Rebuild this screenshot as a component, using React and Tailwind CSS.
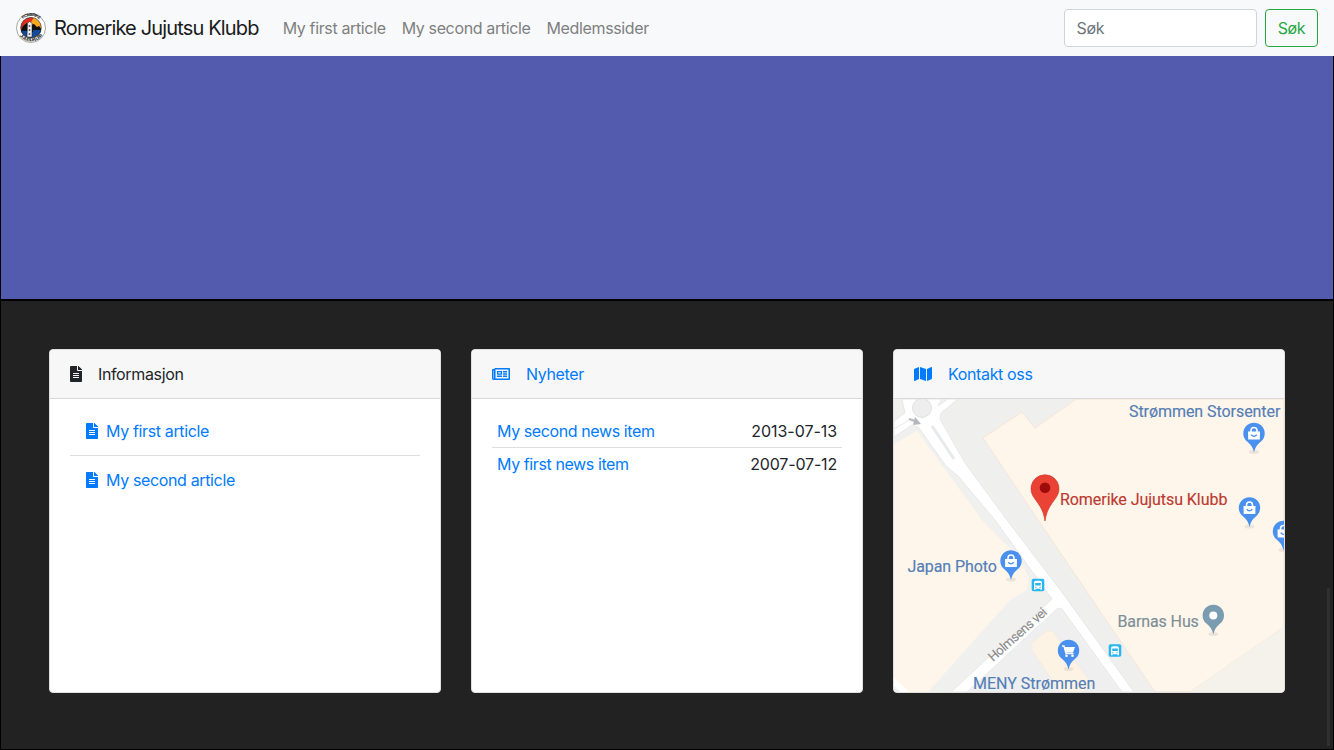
import { FaFileAlt, FaRegNewspaper, FaMap } from "react-icons/fa";

function Logo() {
  return (
    <svg viewBox="0 0 30 30" className="size-[30px]">
      <defs>
        <clipPath id="disc"><circle cx="15" cy="14.7" r="10.3" /></clipPath>
        <path id="top" d="M4.500 9.500A11.700 11.700 0 0 1 25.500 9.500" />
        <path id="bottom" d="M1.600 17.500A13.700 13.700 0 0 0 28.400 17.500" />
      </defs>
      <circle cx="15" cy="15" r="14.500" fill="#fff" stroke="#a5a5a5" strokeWidth="1" />
      <g clipPath="url(#disc)">
        <rect width="30" height="30" fill="#f7a823" />
        <path d="M3 3H19L15 9L10 10L5 16H3Z" fill="#e02b20" />
        <path d="M4 18L7 13L11 9.500L14 12L18 11L21 14L23 13L27 18V20H4Z" fill="#111" />
        <path d="M3 18H12V22H3ZM17 17H27V21H17Z" fill="#12499b" />
        <rect y="19" width="30" height="11" fill="#12499b" />
      </g>
      <circle cx="15" cy="14.700" r="10.300" fill="none" stroke="#222" strokeWidth=".6" />
      <path d="M11.500 10.500L13.500 8.500L16 10V24H11Z" fill="#eee" stroke="#222" strokeWidth=".5" />
      <path d="M13.500 12V14M13.500 16V18M13.500 20V22" stroke="#666" strokeWidth="1.500" />
      <g fontFamily="Liberation Sans, sans-serif" fontWeight="700" fill="#222" fontSize="4.400">
        <text textAnchor="middle"><textPath href="#top" startOffset="50%">ROMERIKE</textPath></text>
        <text textAnchor="middle"><textPath href="#bottom" startOffset="50%">JUJUTSU KLUBB</textPath></text>
      </g>
    </svg>
  );
}

function Pin({ x, y, color = "#4a90ee", children }) {
  return (
    <g transform={`translate(${x} ${y})`}>
      <ellipse cx="0" cy="18" rx="5" ry="2" fill="#000" opacity=".07" />
      <path d="M0 18.500C-1.500 12-4 10-7.500 7A10.700 10.700 0 1 1 7.500 7C4 10 1.500 12 0 18.500Z" fill={color} />
      {children}
    </g>
  );
}

function Bag() {
  return (
    <g>
      <path d="M-3 -2V-3.500A3 3 0 0 1 3 -3.500V-2" fill="none" stroke="#fff" strokeWidth="1.600" />
      <path d="M-6 -2.500H6L5.800 5.500H-5.800Z" fill="#fff" />
      <path d="M-2.800 0.800Q0 4 2.800 0.800" fill="none" stroke="#4a90ee" strokeWidth="1.300" />
    </g>
  );
}

function Bus({ x, y }) {
  return (
    <g transform={`translate(${x} ${y})`}>
      <rect x="-6.300" y="-6.300" width="12.600" height="12.600" rx="1.800" fill="#27b6f0" />
      <path d="M-4 4.800V-2.500Q-4 -4.300 -2 -4.300H2Q4 -4.300 4 -2.500V4.800H2.500V3.800H-2.500V4.800Z" fill="#fff" />
      <path d="M-2.800 -2H2.800V.5H-2.800Z" fill="#27b6f0" />
      <path d="M-2.800 2.300H-1.600M1.600 2.300H2.800" stroke="#27b6f0" />
    </g>
  );
}

function MapPicture() {
  return (
    <svg viewBox="894 399 390 293" className="block h-[293px] w-[390px] rounded-b-[3px]">
      <rect x="894" y="399" width="390" height="293" fill="#f0f0ee" />
      <path d="M946 399H1075L1035 428L1022 412L983 438L1038 520L1155 692H1128L1004 510L965 458L942 420Z" fill="#efefed" />
      <path d="M1052 603L1120 692H965Z" fill="#efeff0" />
      <path d="M894 444L917 431L982 520L1018 557L1029 578L1027 590L1010 600L928 692H908L894 678Z" fill="#fef5eb" />
      <path d="M1075 399H1284V627L1190 692H1155L1038 520L983 438L1022 412L1035 428L1075 400Z" fill="#fef5eb" stroke="#f5e5d7" />
      <path d="M1284 627V692H1190Z" fill="#f5f2ec" />
      <path d="M1032 643L1047 631Q1050 629 1053 632L1092 684L1083 692H1060L1032 650Z" fill="#fdf3e5" stroke="#f6e8d8" strokeWidth=".7" />
      <path
        d="M894 421L905 413L902 399H942L938 406L948 399H958L941 413L940 419L965 463L1007 520L1064 595L1134 692H1122L1062 609L1058 608L967 692H951L1052 599L995 520L958 476L946 466L919 428L912 425L894 437Z"
        fill="#fff"
        stroke="#e6e8ea"
        strokeWidth="1"
        strokeLinejoin="round"
      />
      <path d="M891 679L908 695" stroke="#fff" strokeWidth="6" />
      <circle cx="922" cy="408" r="9.500" fill="#eeeeef" stroke="#dde0e2" />
      <path d="M932 426L954 459" stroke="#e8e9eb" strokeWidth="3" />
      <path d="M894 429L911 419" stroke="#e8eaec" />
      <path d="M909 419L915 421" stroke="#b4b7bb" strokeWidth="2" />
      <path d="M915 417L921 424L913 425Z" fill="#b4b7bb" />
      <g fontFamily="Roboto, sans-serif" fontSize="16" fill="#537eb6" stroke="#537eb6" strokeWidth=".15">
        <text x="1129" y="417" textLength="151">Strømmen Storsenter</text>
        <text x="907.500" y="572" textLength="89">Japan Photo</text>
        <text x="973" y="689" textLength="122">MENY Strømmen</text>
        <text x="1117.500" y="626.500" textLength="81" fill="#7c8f97" stroke="#7c8f97">Barnas Hus</text>
        <text x="1060" y="504.500" textLength="167" fill="#bd3a30" stroke="#bd3a30">Romerike Jujutsu Klubb</text>
        <text transform="translate(993 662) rotate(-41.500)" fontSize="13" textLength="73" fill="#8b8b8b" stroke="#8b8b8b">Holmsens vei</text>
      </g>
      <path d="M1045 521C1043 507 1037 503 1033 496A14 14 0 1 1 1057 496C1053 503 1047 507 1045 521Z" fill="#ea4335" stroke="#d33b2d" strokeWidth=".7" />
      <circle cx="1045" cy="487.700" r="5.300" fill="#9d0b0b" />
      <Pin x={1254} y={434}><Bag /></Pin>
      <Pin x={1249.5} y={508.5}><Bag /></Pin>
      <Pin x={1283.5} y={532}><Bag /></Pin>
      <Pin x={1011} y={561.5}><Bag /></Pin>
      <Pin x={1068.5} y={651}>
        <path d="M-6.500 -5H-4.500L-2.500 2.500H5" fill="none" stroke="#fff" strokeWidth="1.400" />
        <path d="M-4.500 -4H6.500L4.500 1.500H-3Z" fill="#fff" />
        <circle cx="-2" cy="4.700" r="1.300" fill="#fff" /><circle cx="4" cy="4.700" r="1.300" fill="#fff" />
      </Pin>
      <Pin x={1213.3} y={616} color="#7a9cb0"><circle cy="-.5" r="4" fill="#fff" /></Pin>
      <Bus x={1038} y={585} />
      <Bus x={1115} y={650.5} />
    </svg>
  );
}

function Card({ header, children }) {
  return (
    <section className="flex h-[344px] flex-1 flex-col overflow-hidden rounded border border-[#dfdfdf] bg-white">
      <header className="flex h-[49px] shrink-0 items-center border-b border-[#d8d8d8] bg-[#f7f7f7] px-5">{header}</header>
      {children}
    </section>
  );
}

export default function App() {
  return (
    <div className="flex h-[750px] w-[1334px] flex-col overflow-hidden bg-[#222] font-[Inter,sans-serif] text-base leading-6 tracking-[-0.36px] text-[#212529]">
      <nav className="flex h-14 shrink-0 items-center bg-[#f8f9fa] px-4">
        <a className="flex items-center gap-2 text-xl tracking-[-0.84px] text-[#1a1b1c]"><Logo />Romerike Jujutsu Klubb</a>
        <div className="ml-6 flex gap-4 text-[#7f8081]">
          <a>My first article</a><a>My second article</a><a>Medlemssider</a>
        </div>
        <form className="ml-auto flex gap-2">
          <input placeholder="Søk" className="h-[38px] w-[193px] rounded border border-[#ced4da] bg-white px-[11.5px] placeholder:text-[#6c757d]" />
          <button type="button" className="h-[38px] w-[53px] rounded border border-[#28a745] text-[#28a745]">Søk</button>
        </form>
      </nav>
      <div className="h-[244px] shrink-0 border-x border-b border-black bg-[#535bae]" />
      <main className="flex flex-1 items-start border border-black">
        <div className="flex flex-1 gap-[30px] pt-12 pl-12">
          <Card header={<><FaFileAlt className="h-4 w-3" /><span className="ml-4">Informasjon</span></>}>
            <ul className="px-5 pt-2 text-[#007bff]">
              <li className="flex h-[49px] items-center gap-2 border-b border-[#dfdfdf] px-4"><FaFileAlt className="h-4 w-3" />My first article</li>
              <li className="flex h-12 items-center gap-2 px-4"><FaFileAlt className="h-4 w-3" />My second article</li>
            </ul>
          </Card>
          <Card header={<a className="flex items-center text-[#007bff]"><FaRegNewspaper className="h-4 w-[18px]" /><span className="ml-4">Nyheter</span></a>}>
            <div className="px-5 pt-4">
              <div className="flex h-[33px] items-center justify-between border-b border-[#dfdfdf] px-[5px]"><a className="tracking-[-0.4px] text-[#007bff]">My second news item</a><span className="tracking-[-0.05px]">2013-07-13</span></div>
              <div className="flex h-8 items-center justify-between px-[5px]"><a className="tracking-[-0.4px] text-[#007bff]">My first news item</a><span className="tracking-[-0.17px]">2007-07-12</span></div>
            </div>
          </Card>
          <Card header={<a className="flex items-center text-[#007bff]"><FaMap className="h-4 w-[18px]" /><span className="ml-4">Kontakt oss</span></a>}>
            <MapPicture />
          </Card>
        </div>
        <div className="flex w-12 justify-end self-stretch pt-[287px] pr-[3px] pb-[3px]"><div className="w-[3px] bg-[#303030]" /></div>
      </main>
    </div>
  );
}
